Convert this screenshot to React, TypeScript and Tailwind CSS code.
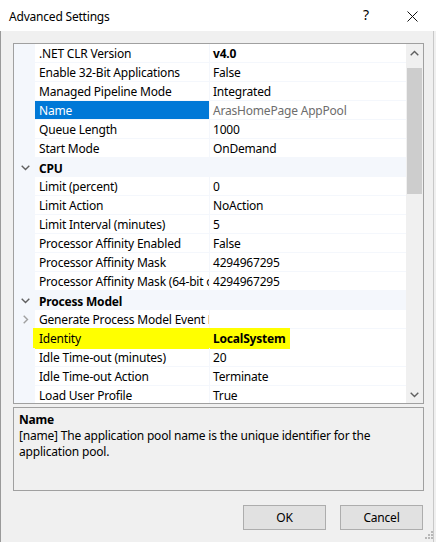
import React from "react";

type Row =
  | { kind: "cat"; label: string }
  | { kind: "prop"; name: string; value: string; bold?: boolean; selected?: boolean; readonly?: boolean; expandable?: boolean; highlight?: boolean };

const rows: Row[] = [
  { kind: "prop", name: ".NET CLR Version", value: "v4.0", bold: true },
  { kind: "prop", name: "Enable 32-Bit Applications", value: "False" },
  { kind: "prop", name: "Managed Pipeline Mode", value: "Integrated" },
  { kind: "prop", name: "Name", value: "ArasHomePage AppPool", selected: true, readonly: true },
  { kind: "prop", name: "Queue Length", value: "1000" },
  { kind: "prop", name: "Start Mode", value: "OnDemand" },
  { kind: "cat", label: "CPU" },
  { kind: "prop", name: "Limit (percent)", value: "0" },
  { kind: "prop", name: "Limit Action", value: "NoAction" },
  { kind: "prop", name: "Limit Interval (minutes)", value: "5" },
  { kind: "prop", name: "Processor Affinity Enabled", value: "False" },
  { kind: "prop", name: "Processor Affinity Mask", value: "4294967295" },
  { kind: "prop", name: "Processor Affinity Mask (64-bit option)", value: "4294967295" },
  { kind: "cat", label: "Process Model" },
  { kind: "prop", name: "Generate Process Model Event Log Entry", value: "", expandable: true },
  { kind: "prop", name: "Identity", value: "LocalSystem", bold: true, highlight: true },
  { kind: "prop", name: "Idle Time-out (minutes)", value: "20" },
  { kind: "prop", name: "Idle Time-out Action", value: "Terminate" },
  { kind: "prop", name: "Load User Profile", value: "True" },
];

function ChevronDown({ color = "#606060" }: { color?: string }) {
  return (
    <svg width="9" height="6" viewBox="0 0 9 6">
      <path d="M0.7 0.7 L4.5 4.5 L8.3 0.7" fill="none" stroke={color} strokeWidth="1.4" />
    </svg>
  );
}

function ChevronRight({ color = "#a0a0a0" }: { color?: string }) {
  return (
    <svg width="6" height="9" viewBox="0 0 6 9">
      <path d="M0.7 0.7 L4.5 4.5 L0.7 8.3" fill="none" stroke={color} strokeWidth="1.4" />
    </svg>
  );
}

function ChevronUp({ color = "#606060" }: { color?: string }) {
  return (
    <svg width="9" height="6" viewBox="0 0 9 6">
      <path d="M0.7 5.3 L4.5 1.5 L8.3 5.3" fill="none" stroke={color} strokeWidth="1.4" />
    </svg>
  );
}

export default function App() {
  return (
    <div className="w-[436px] h-[542px] bg-[#f0f0f0] relative overflow-hidden font-['Segoe_UI','Noto_Sans',sans-serif] text-[12px] tracking-[-0.2px] text-black leading-none">
      {/* Title bar */}
      <div className="h-[31px] bg-white flex items-center relative">
        <span className="pl-[9px] pt-[2px] text-[12px]">Advanced Settings</span>
        <span className="absolute left-[363px] top-[8px] text-[14px] leading-none">?</span>
        <svg className="absolute left-[407px] top-[11px]" width="11" height="11" viewBox="0 0 11 11">
          <path d="M0.5 0.5 L10.5 10.5 M10.5 0.5 L0.5 10.5" stroke="#111" strokeWidth="1" />
        </svg>
      </div>

      <div className="absolute left-0 top-[31px] bottom-0 w-px bg-[#9a9a9a]" />
      <div className="absolute left-[433px] top-[31px] bottom-0 w-px bg-[#c8c8c8]" />

      <div className="pl-[13px] pt-[12px] w-[424px]">
        {/* Property grid */}
        <div className="h-[361px] border border-[#a0a0a0] bg-white flex overflow-hidden">
          <div className="w-[392px] flex flex-col overflow-hidden">
            {rows.map((r, i) =>
              r.kind === "cat" ? (
                <div key={i} className="h-[19px] shrink-0 bg-[#f4f7fc] flex items-center">
                  <div className="w-[21px] flex justify-center pl-[1px] pt-[1px]">
                    <ChevronDown />
                  </div>
                  <span className="pl-[4px] pt-[2px] font-bold">{r.label}</span>
                </div>
              ) : (
                <div key={i} className="h-[19px] shrink-0 flex relative">
                  {r.highlight && (
                    <div className="absolute left-[19px] top-[-1px] w-[257px] h-[21px] bg-[#ffff00]" />
                  )}
                  <div className="w-[21px] bg-[#f4f7fc] flex items-center justify-center pl-[2px]">
                    {r.expandable && <ChevronRight />}
                  </div>
                  <div className="flex-1 flex flex-col relative">
                    <div className="h-[18px] flex">
                      <div
                        className={
                          "w-[174px] flex items-center pl-[4px] pt-[2px] whitespace-nowrap overflow-hidden " +
                          (r.selected ? "bg-[#0078d7] text-white" : "")
                        }
                      >
                        {r.name}
                      </div>
                      <div className={"w-px " + (r.highlight ? "" : "bg-[#f4f7fc]")} />
                      <div
                        className={
                          "flex-1 flex items-center pl-[3px] pt-[2px] whitespace-nowrap overflow-hidden " +
                          (r.bold ? "font-bold " : "") +
                          (r.readonly ? "text-[#6d6d6d]" : "")
                        }
                      >
                        {r.value}
                      </div>
                    </div>
                    <div className={"h-px " + (r.highlight ? "" : "bg-[#f4f7fc]")} />
                  </div>
                </div>
              )
            )}
          </div>
          {/* Scrollbar */}
          <div className="w-[17px] bg-[#f0f0f0] flex flex-col">
            <div className="h-[17px] flex items-center justify-center">
              <ChevronUp />
            </div>
            <div className="flex-1 relative">
              <div className="absolute left-[1px] right-[1px] top-[7px] h-[126px] bg-[#cdcdcd]" />
            </div>
            <div className="h-[17px] flex items-center justify-center">
              <ChevronDown />
            </div>
          </div>
        </div>

        {/* Description */}
        <div className="mt-[3px] h-[84px] border border-[#a0a0a0] pl-[5px] pt-[3px] leading-[16px]">
          <div className="font-bold leading-[17px]">Name</div>
          <div className="pr-[8px]">
            [name] The application pool name is the unique identifier for the application pool.
          </div>
        </div>

        {/* Buttons */}
        <div className="flex justify-end gap-[14px] mt-[14px] pr-[1px]">
          <button className="w-[83px] h-[25px] bg-[#e1e1e1] border border-[#adadad] text-[12px] pt-[1px]">OK</button>
          <button className="w-[83px] h-[25px] bg-[#e1e1e1] border border-[#adadad] text-[12px] pt-[1px]">Cancel</button>
        </div>
      </div>

      {/* Grip */}
      <svg className="absolute left-[424px] top-[530px]" width="10" height="10" viewBox="0 0 10 10">
        <rect x="7" y="1" width="2" height="2" fill="#b8b8b8" />
        <rect x="4" y="4" width="2" height="2" fill="#b8b8b8" />
        <rect x="7" y="4" width="2" height="2" fill="#b8b8b8" />
        <rect x="1" y="7" width="2" height="2" fill="#b8b8b8" />
        <rect x="4" y="7" width="2" height="2" fill="#b8b8b8" />
        <rect x="7" y="7" width="2" height="2" fill="#b8b8b8" />
      </svg>
    </div>
  );
}
